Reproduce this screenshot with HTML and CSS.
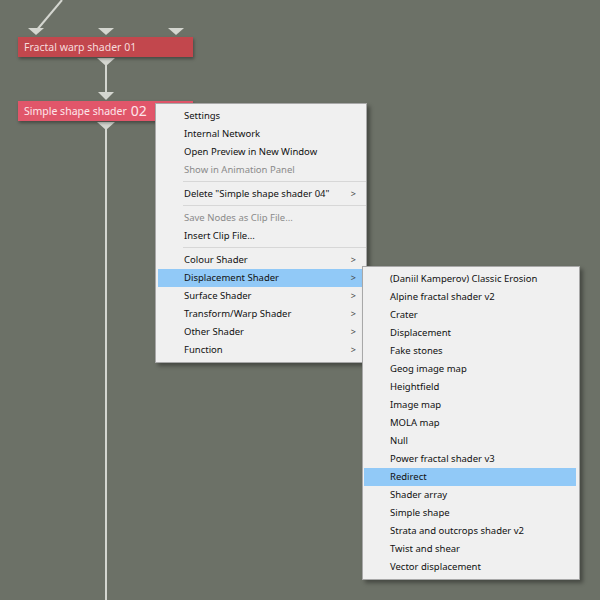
FILE: index.html
```html
<!DOCTYPE html>
<html lang="en">
<head>
    <meta charset="UTF-8">
    <title>Node network - context menu</title>
    <link rel="stylesheet" href="styles.css">
</head>
<body>
    <main class="red-nodos">
        <!-- cables y conectores -->
        <svg class="cables" width="600" height="600" viewBox="0 0 600 600">
            <g stroke="#d4d6d0" stroke-width="2" fill="none">
                <line x1="62" y1="0" x2="36" y2="31"/>
                <line x1="106" y1="64" x2="106" y2="94"/>
                <line x1="106" y1="128" x2="106" y2="600"/>
            </g>
            <g fill="#d4d6d0">
                <polygon points="28,28 44,28 36,35"/>
                <polygon points="98,28 114,28 106,35"/>
                <polygon points="168,28 184,28 176,35"/>
                <polygon points="97,58 115,58 106,66"/>
                <polygon points="98,92 114,92 106,100"/>
                <polygon points="97,122 115,122 106,130"/>
            </g>
        </svg>

        <div class="nodo nodo-warp">Fractal warp shader 01</div>
        <div class="nodo nodo-shape">Simple shape shader <span class="numero">02</span></div>

        <!-- menu contextual -->
        <ul class="menu menu-principal">
            <li class="opcion">Settings</li>
            <li class="opcion">Internal Network</li>
            <li class="opcion">Open Preview in New Window</li>
            <li class="opcion desactivada">Show in Animation Panel</li>
            <li class="separador"></li>
            <li class="opcion sub">Delete "Simple shape shader 04"</li>
            <li class="separador"></li>
            <li class="opcion desactivada">Save Nodes as Clip File...</li>
            <li class="opcion">Insert Clip File...</li>
            <li class="separador"></li>
            <li class="opcion sub">Colour Shader</li>
            <li class="opcion sub activa">Displacement Shader</li>
            <li class="opcion sub">Surface Shader</li>
            <li class="opcion sub">Transform/Warp Shader</li>
            <li class="opcion sub">Other Shader</li>
            <li class="opcion sub">Function</li>
        </ul>

        <ul class="menu submenu">
            <li class="opcion">(Daniil Kamperov) Classic Erosion</li>
            <li class="opcion">Alpine fractal shader v2</li>
            <li class="opcion">Crater</li>
            <li class="opcion">Displacement</li>
            <li class="opcion">Fake stones</li>
            <li class="opcion">Geog image map</li>
            <li class="opcion">Heightfield</li>
            <li class="opcion">Image map</li>
            <li class="opcion">MOLA map</li>
            <li class="opcion">Null</li>
            <li class="opcion">Power fractal shader v3</li>
            <li class="opcion activa">Redirect</li>
            <li class="opcion">Shader array</li>
            <li class="opcion">Simple shape</li>
            <li class="opcion">Strata and outcrops shader v2</li>
            <li class="opcion">Twist and shear</li>
            <li class="opcion">Vector displacement</li>
        </ul>
    </main>
</body>
</html>
```

FILE: styles.css
```css
/* fondo del editor de nodos */
body {
    margin: 0;
    background: #6c7167;
    font-family: "Noto Sans", "Open Sans", sans-serif;
}

.red-nodos {
    position: relative;
    width: 600px;
    height: 600px;
    overflow: hidden;
}

.cables {
    position: absolute;
    left: 0;
    top: 0;
}

.nodo {
    position: absolute;
    left: 18px;
    width: 175px;
    height: 20px;
    box-sizing: border-box;
    padding-left: 6px;
    display: flex;
    align-items: center;
    font-size: 10.5px;
    color: #f6dcdc;
    box-shadow: 1px 2px 3px rgba(0, 0, 0, 0.35);
}

.nodo-warp {
    top: 37px;
    background: #c2474d;
}

.nodo-shape {
    top: 101px;
    background: #e1566a;
    color: #fde6ea;
}

.numero {
    font-size: 14px;
    margin-left: 4px;
    line-height: 1;
}

/* menus */
.menu {
    position: absolute;
    list-style: none;
    margin: 0;
    padding: 3px 0;
    background: #f0f0f0;
    border: 1px solid #a8a8a8;
    box-sizing: border-box;
    font-size: 9.5px;
    color: #111;
    box-shadow: 3px 3px 4px rgba(0, 0, 0, 0.35);
}

.menu-principal {
    left: 155px;
    top: 103px;
    width: 212px;
}

.submenu {
    left: 362px;
    top: 266px;
    width: 218px;
}

.opcion {
    position: relative;
    height: 18px;
    line-height: 18px;
    margin: 0 2px;
    padding-left: 26px;
    white-space: nowrap;
}

.submenu .opcion {
    margin: 0 3px 0 1px;
}

.desactivada {
    color: #8a8a8a;
}

.activa {
    background: #91c9f7;
}

.sub::after {
    content: ">";
    position: absolute;
    right: 8px;
    top: 0;
    font-size: 9px;
    color: #444;
}

.separador {
    height: 1px;
    margin: 2px 0 3px 27px;
    background: #d7d7d7;
}
```
